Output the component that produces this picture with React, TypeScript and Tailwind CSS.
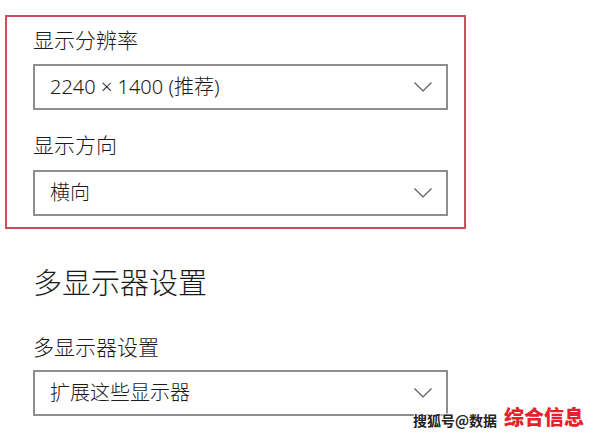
import React from "react";

const font = { fontFamily: '"Noto Sans CJK SC", "Noto Sans", sans-serif' };
const mixed = { fontFamily: '"Noto Sans", "Noto Sans CJK SC", sans-serif' };

function Chevron() {
  return (
    <svg width="20" height="12" viewBox="0 0 20 12" className="shrink-0">
      <path d="M1.5 1.5 L10 10 L18.5 1.5" fill="none" stroke="#5a5a5a" strokeWidth="1.2" />
    </svg>
  );
}

function Dropdown({ text }: { text: string }) {
  return (
    <div className="w-[415px] h-[46px] border-2 border-[#8e8e8e] bg-white flex items-center justify-between pl-[15px] pr-[13px]">
      <span className="text-[20px] leading-none text-[#1a1a1a] font-light" style={mixed}>
        {text}
      </span>
      <Chevron />
    </div>
  );
}

export default function App() {
  return (
    <div className="w-[594px] h-[436px] bg-white relative overflow-hidden font-light" style={font}>
      <div className="ml-[5px] mt-[15px] w-[461px] h-[214px] border-2 border-[#c9515b] pl-[26px] flex flex-col">
        <div className="mt-[8px] h-[28px] flex items-center text-[21px] leading-none text-[#1a1a1a]">显示分辨率</div>
        <div className="mt-[11px]">
          <Dropdown text="2240 × 1400 (推荐)" />
        </div>
        <div className="mt-[20px] h-[28px] flex items-center text-[21px] leading-none text-[#1a1a1a]">显示方向</div>
        <div className="mt-[12px]">
          <Dropdown text="横向" />
        </div>
      </div>
      <div className="pl-[33px] flex flex-col">
        <div className="mt-[34px] h-[36px] flex items-center text-[29px] leading-none text-[#1a1a1a]">多显示器设置</div>
        <div className="mt-[33px] h-[28px] flex items-center text-[21px] leading-none text-[#1a1a1a]">多显示器设置</div>
        <div className="mt-[10px]">
          <Dropdown text="扩展这些显示器" />
        </div>
      </div>
      <div
        className="absolute left-[413px] top-[413px] text-[14px] leading-none text-[#222] font-bold"
        style={{ textShadow: "1px 0 #fff, -1px 0 #fff, 0 1px #fff, 0 -1px #fff" }}
      >
        搜狐号@数据
      </div>
      <div
        className="absolute left-[504px] top-[407px] text-[20px] leading-none font-black text-[#e8202a]"
        style={{ textShadow: "1px 0 #fff, -1px 0 #fff, 0 1px #fff, 0 -1px #fff" }}
      >
        综合信息
      </div>
    </div>
  );
}
